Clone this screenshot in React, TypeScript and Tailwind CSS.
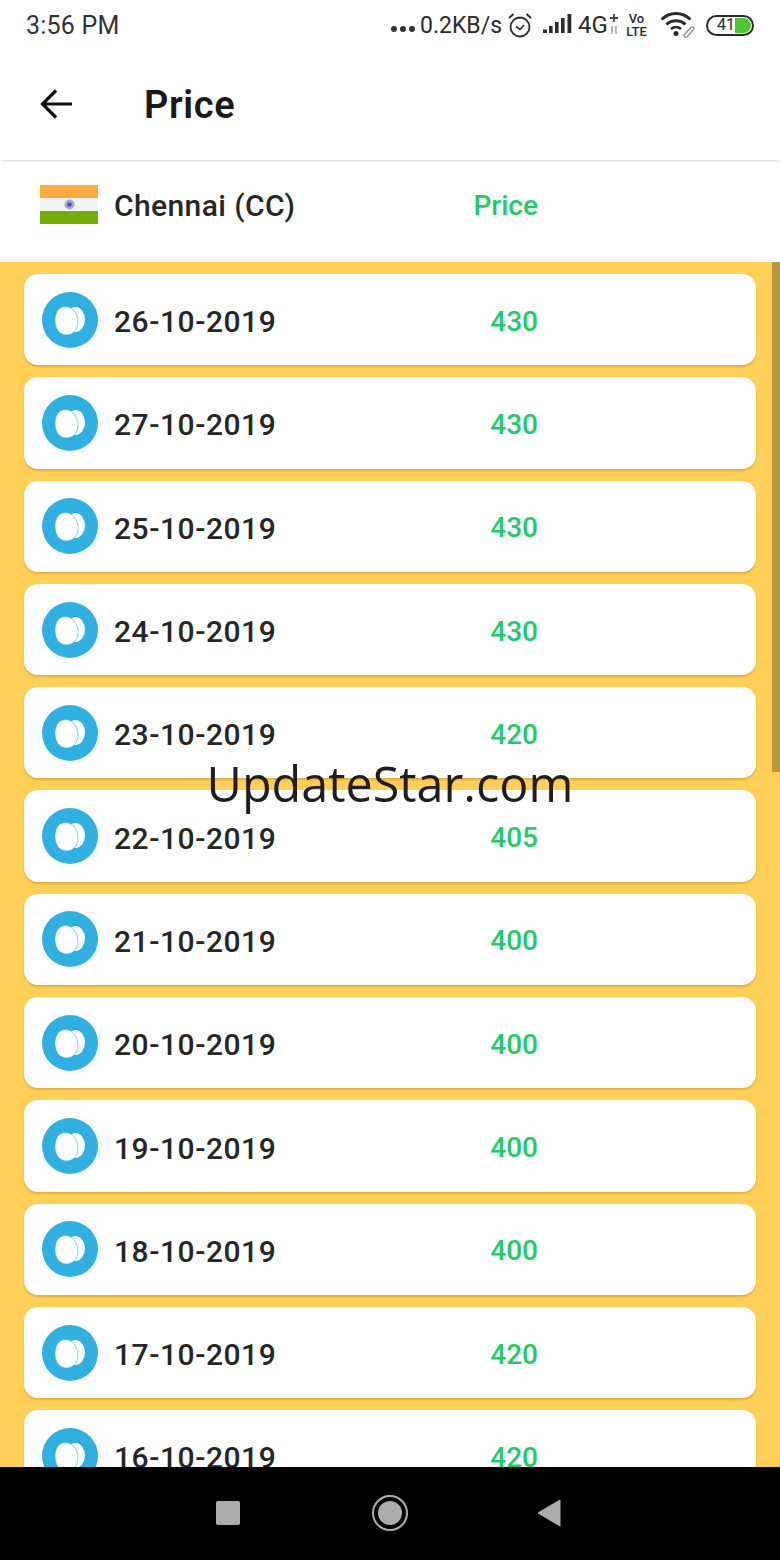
const rows = [
  ["26-10-2019", "430"],
  ["27-10-2019", "430"],
  ["25-10-2019", "430"],
  ["24-10-2019", "430"],
  ["23-10-2019", "420"],
  ["22-10-2019", "405"],
  ["21-10-2019", "400"],
  ["20-10-2019", "400"],
  ["19-10-2019", "400"],
  ["18-10-2019", "400"],
  ["17-10-2019", "420"],
  ["16-10-2019", "420"],
];

function EggIcon() {
  return (
    <svg width="56" height="56" viewBox="0 0 56 56" className="shrink-0">
      <circle cx="28" cy="28" r="28" fill="#2fb0e0" />
      <ellipse cx="33.500" cy="27.500" rx="9.500" ry="12.500" fill="#ffffff" />
      <path d="M23.500 14.500c7 0 12.500 7.500 12.500 15.500S31 43 24.500 43 13 37.500 13 28.500 17.500 14.500 23.500 14.500z" fill="#ffffff" stroke="#2fb0e0" strokeWidth="0.600" />
    </svg>
  );
}

function Flag() {
  return (
    <svg width="58" height="39" viewBox="0 0 58 39" className="shrink-0 mb-[1px]">
      <rect width="58" height="13" fill="#fdab40" />
      <rect y="13" width="58" height="13" fill="#f3f3f3" />
      <rect y="26" width="58" height="13" fill="#74ad0a" />
      <circle cx="29.500" cy="19.500" r="5" fill="#a7a5dc" />
      <circle cx="29.500" cy="19.500" r="2.200" fill="#4f4ea5" />
    </svg>
  );
}

function StatusIcons() {
  return (
    <div className="flex items-center text-[#2b2b2b]">
      <div className="flex gap-[3px] mr-[5px] mt-[7px]">
        <span className="w-[6px] h-[6px] rounded-full bg-[#333333]" />
        <span className="w-[6px] h-[6px] rounded-full bg-[#333333]" />
        <span className="w-[6px] h-[6px] rounded-full bg-[#333333]" />
      </div>
      <span className="text-[23px] leading-none w-[81px]">0.2KB/s</span>
      {/* alarm */}
      <svg width="26" height="26" viewBox="0 0 26 26" fill="none" stroke="#2b2b2b" className="ml-[6px]">
        <circle cx="13" cy="15" r="9.500" strokeWidth="1.800" />
        <path d="M9 14.500l4 3 4-4.500" strokeWidth="1.600" />
        <path d="M2 6l4.500-4M24 6l-4.500-4" strokeWidth="2" />
      </svg>
      {/* signal */}
      <svg width="30" height="22" viewBox="0 0 30 22" fill="#2b2b2b" className="ml-[10px]">
        <rect x="0" y="15.500" width="4" height="3.500" />
        <rect x="6" y="12" width="3.600" height="7" />
        <rect x="12" y="8" width="3.600" height="11" />
        <rect x="18" y="4" width="3.600" height="15" />
        <rect x="24.500" y="0" width="3.800" height="19" />
      </svg>
      <span className="text-[24px] leading-none ml-[5px] w-[29px]">4G</span>
      <svg width="12" height="24" viewBox="0 0 12 24" fill="none" className="ml-[1px]">
        <path d="M6 1v8M2 5h8" stroke="#444444" strokeWidth="1.800" />
        <path d="M4 13v8M8 13v8" stroke="#aaaaaa" strokeWidth="1.600" />
      </svg>
      <div className="ml-[4px] flex flex-col items-center w-[25px] text-[13px] leading-[13px] font-medium">
        <span>Vo</span>
        <span>LTE</span>
      </div>
      {/* wifi */}
      <svg width="36" height="26" viewBox="0 0 36 26" fill="none" className="ml-[11px]">
        <path d="M1.500 7.500C10 -0.500 22 -0.500 30.500 7.500" stroke="#2b2b2b" strokeWidth="2.800" />
        <path d="M6.500 12.500C12 7.500 20 7.500 25.500 12.500" stroke="#2b2b2b" strokeWidth="2.800" />
        <path d="M11 17c3-2.500 7-2.500 10 0" stroke="#2b2b2b" strokeWidth="2.600" />
        <circle cx="16" cy="21.500" r="2.500" fill="#2b2b2b" />
        <path d="M24 23l7-7.500c2-1.500 3.500 0 2.500 2l-6.500 7.500c-1.500 1-3.500-.500-3-2z" stroke="#888888" strokeWidth="1.200" />
      </svg>
      {/* battery */}
      <div className="ml-[10px] w-[48px] h-[21px] rounded-full border-2 border-[#2b2b2b] flex items-center justify-end p-[1px]">
        <span className="text-[16px] leading-none">41</span>
        <span className="w-[16px] h-full bg-[#4cc82e] rounded-r-full" />
      </div>
    </div>
  );
}

export default function App() {
  return (
    <div className="h-[1560px] w-[780px] bg-white flex flex-col overflow-hidden relative font-['Roboto',sans-serif]">
      {/* status bar */}
      <div className="h-[50px] shrink-0 flex items-center justify-between pl-[26px] pr-[26px]">
        <span className="text-[25px] leading-none text-[#333333] tracking-[0.2px]">3:56 PM</span>
        <StatusIcons />
      </div>

      {/* toolbar */}
      <header className="h-[110px] shrink-0 flex items-center pl-[40px] shadow-[0_2px_2px_-1px_rgba(0,0,0,0.16)] relative">
        <svg width="32" height="30" viewBox="0 0 32 30" fill="none" stroke="#111111" strokeWidth="3.200" className="-mt-[2px]">
          <path d="M32 15H2M16 1.500L2.500 15 16 28.500" />
        </svg>
        <h1 className="ml-[72px] text-[38px] tracking-[0.6px] font-semibold text-[#1a1a1a]">Price</h1>
      </header>

      {/* column heading */}
      <div className="h-[102px] shrink-0 flex items-center pl-[40px] pb-[12px]">
        <Flag />
        <span className="ml-[16px] text-[30px] font-medium text-[#262626] tracking-[0.4px]">Chennai (CC)</span>
        <span className="ml-auto mr-[242px] mt-[2px] text-[28px] font-medium text-[#1fcb6c]">Price</span>
      </div>

      {/* list */}
      <div className="flex-1 min-h-0 bg-[#ffcf58] overflow-hidden pt-[12px] px-[24px] relative">
        <div className="flex flex-col gap-[12px]">
          {rows.map(([date, price]) => (
            <div
              key={date}
              className="h-[91.3px] shrink-0 bg-white rounded-[14px] shadow-[0_2px_2px_rgba(190,140,30,0.45)] flex items-center pl-[18px]"
            >
              <EggIcon />
              <span className="ml-[16px] mt-[4px] w-[300px] text-[30px] font-medium text-[#262626] tracking-[0.55px]">{date}</span>
              <span className="mt-[4px] w-[124px] text-right text-[28px] font-medium text-[#1fcb6c]">{price}</span>
            </div>
          ))}
        </div>
        <div className="absolute right-0 top-0 w-[8px] h-[510px] bg-[#b8983f]" />
      </div>

      {/* nav bar */}
      <nav className="h-[93px] shrink-0 bg-black flex items-center relative">
        <span className="absolute left-[216px] top-[34px] w-[24px] h-[24px] rounded-[2px] bg-[#adadad]" />
        <span className="absolute left-[372px] top-[28px] w-[36px] h-[36px] rounded-full border-[2px] border-[#adadad] flex items-center justify-center">
          <span className="w-[24px] h-[24px] rounded-full bg-[#adadad]" />
        </span>
        <svg width="24" height="28" viewBox="0 0 24 28" className="absolute left-[537px] top-[32px]">
          <path d="M23 1v26L1 14z" fill="#adadad" stroke="#adadad" strokeLinejoin="round" />
        </svg>
      </nav>

      {/* watermark */}
      <div className="absolute left-0 right-0 top-[748px] text-center text-[48.500px] leading-[70px] text-[#1e1e1e] font-['Open_Sans',sans-serif]">
        UpdateStar.com
      </div>
    </div>
  );
}
